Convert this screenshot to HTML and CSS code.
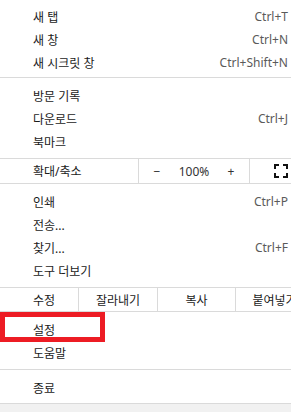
FILE: index.html
```html
<!doctype html>
<html>
  <head>
    <meta charset="UTF-8">
    <title>메뉴</title>
    <link rel="stylesheet" href="styles.css">
  </head>
  <body>
    <div class="menu">
      <div class="group first">
        <div class="item"><span>새 탭</span><span class="key">Ctrl+T</span></div>
        <div class="item"><span>새 창</span><span class="key">Ctrl+N</span></div>
        <div class="item"><span>새 시크릿 창</span><span class="key">Ctrl+Shift+N</span></div>
      </div>
      <div class="group">
        <div class="item"><span>방문 기록</span></div>
        <div class="item"><span>다운로드</span><span class="key">Ctrl+J</span></div>
        <div class="item"><span>북마크</span></div>
      </div>
      <div class="zoom">
        <div class="label">확대/축소</div>
        <div class="zoom-ctrl">
          <span>−</span><span class="pct">100%</span><span>+</span>
        </div>
        <div class="full">
          <svg width="14" height="14" viewBox="0 0 14 14" fill="none" stroke="#111" stroke-width="2">
            <path d="M1 5V1h4M9 1h4v4M13 9v4H9M5 13H1V9"/>
          </svg>
        </div>
      </div>
      <div class="group">
        <div class="item"><span>인쇄</span><span class="key">Ctrl+P</span></div>
        <div class="item"><span>전송...</span></div>
        <div class="item"><span>찾기...</span><span class="key">Ctrl+F</span></div>
        <div class="item"><span>도구 더보기</span></div>
      </div>
      <div class="edit">
        <div class="label">수정</div>
        <div class="cell">잘라내기</div>
        <div class="cell">복사</div>
        <div class="cell">붙여넣기</div>
      </div>
      <div class="group">
        <div class="item marked"><span>설정</span><div class="mark"></div></div>
        <div class="item"><span>도움말</span></div>
      </div>
      <div class="group last">
        <div class="item"><span>종료</span></div>
      </div>
    </div>
  </body>
</html>
```

FILE: styles.css
```css
body{
  margin: 0;
  background: #f1f1f1;
  font-family: "Segoe UI", "Noto Sans", "Noto Sans CJK KR", sans-serif;
  font-size: 12px;
  color: #1a1a1a;
  overflow: hidden;
}
.menu{
  background: #fff;
  width: 291px;
  overflow: hidden;
}
.group{
  padding: 6px 0 5px;
  border-bottom: 1px solid #dadada;
}
.group.first{
  padding-top: 5px;
  padding-bottom: 3px;
}
.group.last{
  padding-bottom: 4px;
}
.item{
  position: relative;
  display: flex;
  justify-content: space-between;
  align-items: center;
  height: 23px;
  padding: 0 3px 0 33px;
}
.key{
  color: #5a5a5a;
}
.zoom{
  display: grid;
  grid-template-columns: 138px 112px 1fr;
  height: 24px;
  border-bottom: 1px solid #dadada;
}
.zoom > div, .edit > div{
  display: flex;
  align-items: center;
}
.label{
  padding-left: 33px;
}
.zoom-ctrl{
  border-left: 1px solid #dadada;
  border-right: 1px solid #dadada;
  display: grid !important;
  grid-template-columns: 36px 1fr 36px;
  text-align: center;
  color: #333;
}
.full{
  justify-content: flex-end;
  padding-right: 3px;
}
.edit{
  display: grid;
  grid-template-columns: 78px 79px 78px 78px;
  height: 23px;
  border-bottom: 1px solid #dadada;
}
.edit .cell{
  justify-content: center;
  border-left: 1px solid #dadada;
}
.group:has(.marked){
  padding-top: 6px;
}
.mark{
  position: absolute;
  left: 0;
  top: -6px;
  width: 105px;
  height: 30px;
  box-sizing: border-box;
  border: 5px solid #ed1c24;
}
```
